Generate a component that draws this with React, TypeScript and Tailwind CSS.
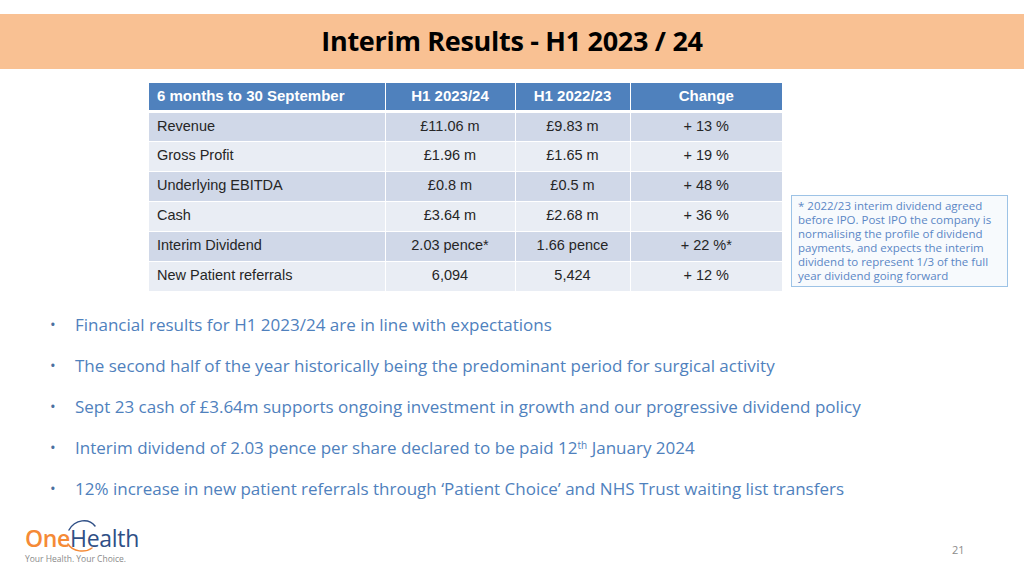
import React from 'react';

const rows = [
  ['Revenue', '£11.06 m', '£9.83 m', '+ 13 %'],
  ['Gross Profit', '£1.96 m', '£1.65 m', '+ 19 %'],
  ['Underlying EBITDA', '£0.8 m', '£0.5 m', '+ 48 %'],
  ['Cash', '£3.64 m', '£2.68 m', '+ 36 %'],
  ['Interim Dividend', '2.03 pence*', '1.66 pence', '+ 22 %*'],
  ['New Patient referrals', '6,094', '5,424', '+ 12 %'],
];

const bullets: React.ReactNode[] = [
  'Financial results for H1 2023/24 are in line with expectations',
  'The second half of the year historically being the predominant period for surgical activity',
  'Sept 23 cash of £3.64m supports ongoing investment in growth and our progressive dividend policy',
  <>
    Interim dividend of 2.03 pence per share declared to be paid 12<sup className="text-[10px]">th</sup> January 2024
  </>,
  '12% increase in new patient referrals through ‘Patient Choice’ and NHS Trust waiting list transfers',
];

function Logo() {
  return (
    <div className="relative w-[120px]">
      {/* swoosh arcs */}
      <svg className="absolute left-[40px] top-[-9px]" width="34" height="36" viewBox="0 0 34 36" fill="none">
        <path d="M4 12 C 10 1, 24 0, 30 8" stroke="#2f4f86" strokeWidth="1.5" strokeLinecap="round" />
        <path d="M3 26 C 8 34, 20 35, 27 30" stroke="#f58a36" strokeWidth="1.5" strokeLinecap="round" />
      </svg>
      <div className="flex items-baseline whitespace-nowrap text-[23px] leading-none tracking-[-0.3px]">
        <span className="font-semibold text-[#f58a36]">One</span>
        <span className="text-[#2f4f86]">Health</span>
      </div>
      <div className="mt-[5px] whitespace-nowrap text-[8.5px] leading-none text-[#8a8a8a]">
        Your Health. Your Choice.
      </div>
    </div>
  );
}

export default function App() {
  return (
    <div className="relative h-[576px] w-[1024px] overflow-hidden bg-white" style={{ fontFamily: '"Open Sans", sans-serif' }}>
      <div className="h-[14px]" />
      {/* Title bar */}
      <div className="flex h-[55px] items-center justify-center bg-[#f9c193]">
        <h1 className="text-[27px] font-bold tracking-[-0.3px] text-black">
          Interim Results - H1 2023 / 24
        </h1>
      </div>

      {/* Table + note */}
      <div className="mt-[14px] flex items-start">
        <table className="ml-[149px] border-collapse text-[14.5px] text-[#262626]" style={{ fontFamily: '"Liberation Sans", sans-serif' }}>
          <thead>
            <tr className="h-[28px] bg-[#4f81bd] text-[15px] font-bold text-white">
              <th className="w-[236px] border-r border-white pl-[8px] text-left">6 months to 30 September</th>
              <th className="w-[130px] border-r border-white text-center">H1 2023/24</th>
              <th className="w-[115px] border-r border-white text-center">H1 2022/23</th>
              <th className="w-[152px] text-center">Change</th>
            </tr>
          </thead>
          <tbody className="border-t-[3px] border-white">
            {rows.map((r, i) => (
              <tr key={r[0]} className={`h-[30px] border-b border-white ${i % 2 === 0 ? 'bg-[#d0d8e8]' : 'bg-[#e9edf4]'}`}>
                <td className="border-r border-white pl-[8px]">{r[0]}</td>
                <td className="border-r border-white text-center">{r[1]}</td>
                <td className="border-r border-white text-center">{r[2]}</td>
                <td className="text-center">{r[3]}</td>
              </tr>
            ))}
          </tbody>
        </table>

        <div className="ml-[9px] mt-[112px] w-[217px] border border-[#9dc3e6] bg-[#f7fafd] px-[6px] py-[3px] text-[11.5px] leading-[14px] text-[#5b87c5]">
          * 2022/23 interim dividend agreed before IPO. Post IPO the company is normalising the profile of dividend payments, and expects the interim dividend to represent 1/3 of the full year dividend going forward
        </div>
      </div>

      {/* Bullets */}
      <ul className="ml-[50px] mt-[20px] flex flex-col gap-[16px] text-[17px] leading-[25px] text-[#4f81bd]">
        {bullets.map((b, i) => (
          <li key={i} className="flex">
            <span className="w-[25px] text-[15px] text-[#4a6fa0]">•</span>
            <span>{b}</span>
          </li>
        ))}
      </ul>

      {/* Footer */}
      <div className="absolute left-[25px] top-[527px]">
        <Logo />
      </div>
      <div className="absolute left-[952px] top-[542px] text-[11px] text-[#8c8c8c]">21</div>
    </div>
  );
}
